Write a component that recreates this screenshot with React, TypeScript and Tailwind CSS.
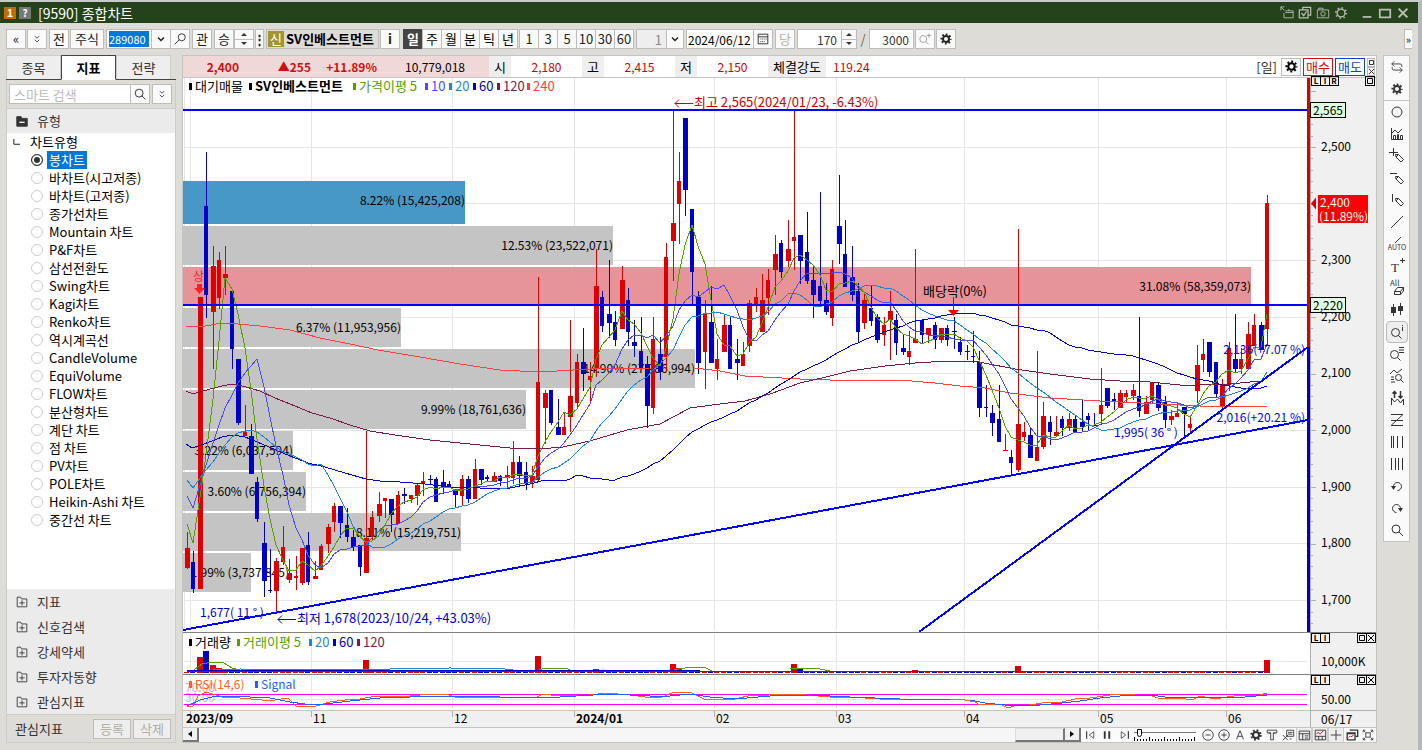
import { useState } from 'react';
import type { ReactNode } from 'react';
import { clsx } from 'clsx';

const RED = '#dd0000';
const BLUE = '#0000c8';
const LINE = '#0000ff';

// [high, body top, body bottom, low, rising]
type Candle = [number, number, number, number, 0 | 1];

const candles: Candle[] = [
  [532, 548, 568, 569, 1], [551, 562, 589, 593, 0], [297, 297, 589, 589, 1], [152, 206, 295, 318, 0], [246, 266, 312, 369, 1],
  [252, 260, 298, 309, 1], [246, 274, 278, 295, 1], [291, 291, 349, 369, 0], [359, 359, 423, 425, 0], [405, 432, 436, 436, 1],
  [424, 436, 474, 474, 0], [477, 482, 519, 522, 0], [522, 543, 581, 597, 0], [549, 590, 591, 593, 0], [558, 561, 591, 613, 1],
  [526, 547, 562, 565, 1], [559, 573, 580, 583, 1], [556, 576, 578, 590, 1], [548, 548, 583, 585, 1], [532, 545, 582, 585, 0],
  [561, 576, 579, 579, 1], [544, 546, 570, 570, 1], [524, 527, 544, 553, 1], [503, 506, 522, 532, 1], [506, 506, 523, 538, 0],
  [508, 525, 537, 542, 0], [530, 537, 547, 551, 0], [545, 545, 567, 576, 0], [431, 538, 573, 573, 1], [511, 517, 536, 540, 1],
  [492, 504, 516, 522, 1], [498, 498, 501, 518, 1], [499, 499, 515, 532, 0], [491, 495, 524, 524, 1], [488, 494, 496, 504, 0],
  [495, 495, 499, 503, 1], [484, 485, 496, 505, 1], [472, 481, 483, 496, 1], [475, 479, 480, 485, 0], [477, 479, 502, 502, 0],
  [470, 482, 487, 494, 0], [481, 484, 487, 488, 0], [491, 491, 495, 507, 0], [475, 479, 496, 505, 1], [476, 479, 499, 503, 0],
  [459, 469, 499, 499, 1], [469, 469, 480, 485, 0], [475, 477, 479, 481, 0], [472, 476, 482, 482, 1], [475, 476, 481, 486, 0],
  [466, 475, 478, 487, 1], [441, 462, 478, 484, 1], [456, 462, 476, 486, 0], [462, 472, 484, 490, 0], [466, 476, 482, 488, 1],
  [277, 382, 480, 482, 1], [390, 393, 408, 444, 1], [390, 390, 423, 425, 0], [399, 427, 435, 435, 0], [413, 427, 435, 435, 1],
  [320, 396, 417, 432, 1], [354, 362, 403, 409, 1], [328, 362, 374, 391, 0], [362, 376, 380, 404, 1], [249, 286, 368, 377, 1],
  [291, 297, 326, 332, 0], [260, 314, 323, 338, 0], [311, 322, 340, 346, 0], [266, 280, 329, 329, 1], [288, 300, 332, 346, 0],
  [320, 342, 346, 357, 0], [317, 351, 368, 368, 0], [356, 364, 406, 428, 0], [317, 339, 408, 414, 1], [337, 354, 372, 380, 0],
  [243, 257, 357, 372, 1], [110, 223, 241, 281, 1], [152, 181, 204, 244, 1], [118, 118, 190, 216, 0], [209, 209, 272, 305, 0],
  [291, 297, 363, 374, 0], [300, 314, 352, 389, 1], [286, 322, 363, 363, 0], [339, 359, 369, 380, 1], [314, 325, 352, 352, 1],
  [317, 325, 369, 369, 0], [339, 359, 363, 380, 0], [342, 354, 366, 366, 1], [300, 303, 346, 352, 1], [288, 297, 304, 312, 1],
  [274, 300, 332, 332, 1], [269, 280, 298, 315, 1], [235, 254, 270, 295, 1], [240, 243, 272, 278, 0], [220, 249, 261, 267, 1],
  [110, 237, 241, 270, 1], [235, 235, 261, 284, 0], [212, 252, 281, 284, 0], [266, 280, 295, 318, 0], [192, 286, 301, 306, 0],
  [283, 300, 312, 315, 0], [260, 269, 318, 326, 1], [175, 226, 244, 264, 0], [220, 254, 287, 287, 0], [246, 277, 295, 301, 0],
  [283, 291, 332, 343, 0], [294, 300, 323, 329, 1], [286, 308, 321, 326, 0], [314, 317, 340, 343, 0], [317, 325, 335, 346, 1],
  [291, 311, 320, 360, 1], [314, 320, 343, 355, 0], [334, 348, 352, 355, 0], [331, 351, 357, 365, 1], [249, 339, 343, 343, 1],
  [319, 320, 335, 343, 0], [328, 328, 335, 343, 1], [322, 325, 340, 349, 0], [328, 328, 340, 343, 1], [325, 328, 340, 346, 0],
  [317, 331, 332, 349, 0], [337, 342, 352, 355, 0], [345, 351, 352, 360, 0], [331, 356, 357, 363, 0], [351, 362, 408, 417, 0],
  [385, 407, 408, 417, 0], [405, 413, 423, 436, 0], [385, 419, 442, 442, 0], [434, 450, 451, 451, 1], [450, 457, 463, 475, 0],
  [229, 424, 470, 472, 1], [422, 432, 437, 441, 1], [427, 435, 458, 458, 0], [351, 447, 461, 461, 1], [402, 416, 447, 449, 1],
  [416, 422, 432, 445, 0], [416, 432, 436, 436, 1], [416, 419, 428, 436, 0], [413, 419, 428, 431, 1], [416, 419, 432, 433, 0],
  [399, 422, 427, 431, 0], [413, 416, 420, 430, 0], [413, 425, 426, 426, 0], [368, 405, 414, 425, 1], [388, 388, 406, 408, 0],
  [393, 399, 402, 410, 0], [390, 393, 408, 408, 1], [390, 393, 397, 402, 1], [384, 390, 396, 400, 1], [317, 396, 411, 417, 0],
  [396, 402, 414, 414, 1], [382, 382, 400, 403, 1], [382, 385, 408, 411, 0], [396, 402, 420, 428, 0], [410, 416, 420, 425, 1],
  [402, 413, 417, 417, 1], [407, 407, 414, 436, 0], [417, 424, 428, 432, 1], [345, 365, 391, 403, 1], [339, 354, 360, 372, 1],
  [342, 342, 372, 377, 0], [362, 362, 394, 397, 0], [379, 384, 406, 408, 1], [342, 348, 385, 391, 1], [314, 359, 369, 372, 0],
  [348, 359, 369, 374, 1], [322, 334, 369, 369, 1], [314, 325, 346, 346, 1], [322, 325, 350, 350, 0], [195, 203, 329, 346, 1],
];

const barX = (i: number) => Math.round(187 + i * 6.39);
const closes = candles.map(([, top, bottom, , up]) => (up ? top : bottom));

function average(size: number) {
  const points: string[] = [];
  for (let i = size - 1; i < closes.length; i++) {
    const sum = closes.slice(i - size + 1, i + 1).reduce((a, b) => a + b, 0);
    points.push(`${barX(i)},${Math.round(sum / size)}`);
  }
  return points.join(' ');
}

const lead = (values: number[]) => values.map((y, i) => `${barX(i)},${y}`).join(' ');

const averages = [
  {
    color: '#ff4040',
    points:
      '186,326 205,326 222,323 238,324 260,326 290,330 320,338 350,344 378,350 420,357 460,364 500,370 540,372 590,369 650,368 695,368 720,371 745,376 800,379 830,380 900,380 935,383 960,386 985,388 1010,393 1050,398 1100,401 1160,404 1200,406 1267,406',
  },
  {
    color: '#7a1a4a',
    points:
      '186,391 193,394 210,389 222,386 233,384 246,387 260,391 275,398 295,406 312,413 330,418 350,425 370,431 395,435 430,440 470,444 510,448 540,449 563,447 590,441 627,430 660,424 675,416 690,408 720,404 745,401 770,394 800,383 826,377 850,371 885,366 915,363 947,361 975,361 984,363 1015,369 1050,374 1090,379 1120,381 1150,382 1180,385 1200,385 1230,384 1250,382 1263,381',
  },
  {
    color: BLUE,
    points:
      '186,444 192,448 201,445 212,441 222,437 232,435 245,437 262,444 276,450 290,456 308,463 325,467 345,473 366,479 380,481 400,482 425,484 450,487 480,488 510,488 530,484 545,480 ' +
      average(60),
  },
  {
    color: '#1e86d2',
    points:
      lead([480, 488, 478, 470, 462, 453, 445, 437, 433, 431, 430, 432, 437, 442, 447, 452, 454, 457, 460]) + ' ' + average(20),
  },
  { color: '#4a4aff', points: lead([496, 508, 485, 465, 443, 425, 408, 395, 383]) + ' ' + average(10) },
  { color: '#55a000', points: lead([524, 543, 497, 455]) + ' ' + average(5) },
];

const profile = [
  { y: 181, h: 43, end: 465, label: '8.22% (15,425,208)', fill: '#4798c7' },
  { y: 226, h: 39, end: 613, label: '12.53% (23,522,071)', fill: '#c4c4c4' },
  { y: 267, h: 37, end: 1251, label: '31.08% (58,359,073)', fill: '#e69399' },
  { y: 308, h: 39, end: 401, label: '6.37% (11,953,956)', fill: '#c4c4c4' },
  { y: 349, h: 39, end: 695, label: '14.90% (27,986,994)', fill: '#c4c4c4' },
  { y: 390, h: 39, end: 526, label: '9.99% (18,761,636)', fill: '#c4c4c4' },
  { y: 431, h: 39, end: 293, label: '3.22% (6,037,594)', fill: '#c4c4c4' },
  { y: 472, h: 39, end: 306, label: '3.60% (6,756,394)', fill: '#c4c4c4' },
  { y: 513, h: 38, end: 461, label: '8.11% (15,219,751)', fill: '#c4c4c4' },
  { y: 553, h: 39, end: 251, textEnd: 289, label: '1.99% (3,737,845)', fill: '#c4c4c4' },
];

const gridX = [190, 311, 452, 574, 714, 836, 964, 1098, 1226];
const gridY = [147, 203, 260, 317, 373, 430, 487, 543, 600];

const priceLegend = [
  { x: 189, text: '대기매물', color: '#000' },
  { x: 249, text: 'SV인베스트먼트', color: '#000', bold: true },
  { x: 353, text: '가격이평 5', color: '#55a000' },
  { x: 425, text: '10', color: '#4a4aff' },
  { x: 449, text: '20', color: '#1e86d2' },
  { x: 473, text: '60', color: BLUE },
  { x: 497, text: '120', color: '#7a1a4a' },
  { x: 527, text: '240', color: '#ff4040' },
];

const volumeLegend = [
  { x: 189, text: '거래량', color: '#000' },
  { x: 237, text: '거래이평 5', color: '#55a000' },
  { x: 309, text: '20', color: '#1e86d2' },
  { x: 333, text: '60', color: BLUE },
  { x: 357, text: '120', color: '#7a1a4a' },
];

const volumePeaks: Record<number, number> = {
  2: 16, 3: 22, 4: 8, 5: 5, 6: 3, 28: 13, 55: 17, 64: 4, 76: 9, 77: 5, 95: 9, 96: 4, 114: 3, 130: 7, 169: 13,
};

const months = [
  { x: 190, text: '2023/09', bold: true, tx: 186 },
  { x: 311, text: '11' },
  { x: 452, text: '12' },
  { x: 574, text: '2024/01', bold: true },
  { x: 714, text: '02' },
  { x: 836, text: '03' },
  { x: 964, text: '04' },
  { x: 1098, text: '05' },
  { x: 1226, text: '06' },
];

const chartTypes = [
  '봉차트', '바차트(시고저종)', '바차트(고저종)', '종가선차트', 'Mountain 차트', 'P&F차트', '삼선전환도', 'Swing차트',
  'Kagi차트', 'Renko차트', '역시계곡선', 'CandleVolume', 'EquiVolume', 'FLOW차트', '분산형차트', '계단 차트',
  '점 차트', 'PV차트', 'POLE차트', 'Heikin-Ashi 차트', '중간선 차트',
];

const sections = ['지표', '신호검색', '강세약세', '투자자동향', '관심지표'];

/* ---------- icons ---------- */

function Icon({ children, size = 16, className }: { children: ReactNode; size?: number; className?: string }) {
  return (
    <svg
      width={size}
      height={size}
      viewBox="0 0 16 16"
      fill="none"
      stroke="currentColor"
      strokeWidth="1"
      className={clsx('shrink-0 overflow-visible', className)}
      aria-hidden="true"
    >
      {children}
    </svg>
  );
}

const Gear = ({ size = 14 }: { size?: number }) => (
  <Icon size={size}>
    <circle cx="8" cy="8" r="4" strokeWidth="2.6" />
    <circle cx="8" cy="8" r="6.2" strokeWidth="2.4" strokeDasharray="2.4 2.47" strokeDashoffset="1.2" />
  </Icon>
);

const Magnifier = ({ size = 16 }: { size?: number }) => (
  <Icon size={size}>
    <circle cx="7" cy="7" r="4.5" />
    <path d="M10 10l4 4" />
  </Icon>
);

const Chevron = () => (
  <Icon size={12}>
    <path d="M4 6l4 4 4-4" strokeWidth="2" />
  </Icon>
);

const pencil = <path d="M6.500 6.500h3l5 5-2.500 2.500-5-5zM7 9l2.500-2.500" />;

const tools: { name: string; icon: ReactNode }[] = [
  { name: '원', icon: <circle cx="8" cy="8" r="5" /> },
  { name: '지표차트', icon: <path d="M2.500 2v11.500H14M4.500 13V9.500h2V13M8.500 13V8.500h1V13M11.500 13V9.500h2V13M3 7l3-3 3 3 4-4" /> },
  { name: '십자선', icon: <><path d="M4.500 0v8M0 4.500h9" />{pencil}</> },
  { name: '수평선', icon: <><path d="M1 3.500h7" />{pencil}</> },
  { name: '수직선', icon: <><path d="M3.500 2v8" />{pencil}</> },
  { name: '추세선', icon: <path d="M2 14L14 2" /> },
  {
    name: '자동추세선',
    icon: (
      <>
        <path d="M6 7l6-6" />
        <text x="8" y="14" fontSize="7" textAnchor="middle" fill="currentColor" stroke="none">AUTO</text>
      </>
    ),
  },
  {
    name: '텍스트',
    icon: (
      <>
        <text x="2" y="14" fontSize="13" fill="currentColor" stroke="none" fontFamily="Liberation Serif, serif">T</text>
        <path d="M11 2.500h5M13.500 0v5" />
      </>
    ),
  },
  {
    name: '전체삭제',
    icon: (
      <>
        <text x="1" y="6" fontSize="8" fill="currentColor" stroke="none">All</text>
        <path d="M5.500 11.500l3-4h6l-3 4zM5.500 11.500v3h6l3-3.500V7.500M11.500 11.500v3" />
      </>
    ),
  },
  {
    name: '봉',
    icon: (
      <>
        <path d="M4.500 2v12M11.500 1v12" />
        <path d="M2 5h5v6H2zM9 4h5v5H9z" fill="currentColor" stroke="none" />
      </>
    ),
  },
  { name: '정보', icon: <><circle cx="6.500" cy="8.500" r="4" /><path d="M9.500 11.500l3 3M13.500 1v1M13.500 3v4" /></> },
  { name: '목록', icon: <><circle cx="5.500" cy="8.500" r="4" /><path d="M8.500 11.500l3 3M10 1.500h5M10 4h5M10 6.500h5" /></> },
  { name: '패턴검색', icon: <><path d="M1 6l4-4 3 3 5-4M2 9h3M2 11.500h3M2 14h4" /><circle cx="9.500" cy="9.500" r="3" /><path d="M11.500 11.500l3 3" /></> },
  { name: '매매신호', icon: <><path d="M2.500 15V8l3 4 3-3 3 4 3-4v6" /><path d="M5.500 8V1M3.500 3.500l2-2 2 2M11.500 1v7M9.500 6l2 2 2-2" strokeWidth="1.500" /></> },
  { name: '지그재그', icon: <path d="M2 2.500h12L2 13.500h12M2 8.500h12" /> },
  { name: '시간대', icon: <path d="M2.500 2v12M4.500 2v12M8.500 2v12M13.500 2v12" /> },
  { name: '등간격', icon: <path d="M2.500 2v12M6.500 2v12M9.500 2v12M13.500 2v12" /> },
  { name: '되돌리기', icon: <><path d="M4.500 9a4 4 0 1 1 4 3.500" /><path d="M2 8h5l-2.500 4z" fill="currentColor" stroke="none" /></> },
  { name: '다시실행', icon: <><path d="M11.500 9a4 4 0 1 0-4 3.500" /><path d="M9 8h5l-2.500 4z" fill="currentColor" stroke="none" /></> },
  { name: '확대', icon: <><circle cx="7" cy="7" r="4" /><path d="M10 10l4 4" /></> },
];

const bottomTools: { name: string; icon: ReactNode; boxed?: boolean }[] = [
  { name: '축소', icon: <><circle cx="8" cy="8" r="6" /><path d="M5 8h6" /></> },
  { name: '확대', icon: <><circle cx="8" cy="8" r="6" /><path d="M5 8h6M8 5v6" /></> },
  { name: '글자', icon: <path d="M4 13L8 3l4 10M5.500 9.500h5" /> },
  { name: '설정', icon: <><circle cx="8" cy="8" r="3.500" strokeWidth="2.400" /><circle cx="8" cy="8" r="5.500" strokeWidth="2" strokeDasharray="2.160 2.160" /></> },
  { name: '도구', icon: <path d="M2.500 2.500h11v3h-4v8h-3v-8h-4zM4 7l2-2M12 7l-2-2" /> },
  { name: '엑셀', icon: <path d="M6.500 2.500h8v7h-8zM8 5h5M8 7h5M2 8l6 6M8 8l-6 6M10 12.500h2" /> },
  { name: '표', icon: <path d="M2.500 3.500h12v10h-12zM2.500 6.500h12M6.500 6.500v7M9 9h4M9 11.500h4" />, boxed: true },
  { name: '분석', icon: <><path d="M2.500 2.500h12v11h-12zM2.500 9.500h12M6.500 9.500v4M10.500 9.500v4" /><path d="M4 7l2-2 2 2 4-4" stroke="#b00020" /></>, boxed: true },
  { name: '십자', icon: <path d="M2 8h12M8 2v12" />, boxed: true },
  { name: '창복사', icon: <><path d="M5.500 2.500h9v7h-2M2.500 5.500h9v8h-9zM2.500 6.500h9" strokeWidth="1.500" /><path d="M4 11l2-2 1 1 3-2" stroke="#b00020" /></> },
  { name: '전체화면', icon: <path d="M2.500 5V2.500H5M11 2.500h2.500V5M13.500 11v2.500H11M5 13.500H2.500V11M5.500 5.500h5v5h-5zM3 3l2 2M13 3l-2 2M3 13l2-2M13 13l-2-2" /> },
];

/* ---------- small controls ---------- */

const toolBox = 'flex h-5 items-center justify-center border border-[#bdbcb8] bg-[#fafafa] text-[#222]';

function ToolButton({ children, className, label }: { children: ReactNode; className?: string; label?: string }) {
  return (
    <button type="button" aria-label={label} className={clsx(toolBox, className ?? 'w-5')}>
      {children}
    </button>
  );
}

function Stepper({ className }: { className?: string }) {
  return (
    <div className={clsx('flex h-5 flex-col border border-[#bdbcb8] bg-[#fafafa] text-[#333]', className)}>
      <button type="button" aria-label="증가" className="flex flex-1 items-center justify-center border-b border-[#bdbcb8]">
        <svg width="6" height="3" viewBox="0 0 6 3"><path d="M0 3l3-3 3 3z" fill="currentColor" /></svg>
      </button>
      <button type="button" aria-label="감소" className="flex flex-1 items-center justify-center">
        <svg width="6" height="3" viewBox="0 0 6 3"><path d="M0 0l3 3 3-3z" fill="currentColor" /></svg>
      </button>
    </div>
  );
}

function TitleBar() {
  return (
    <header className="flex h-[21px] items-center justify-between bg-[#24431b] pr-2 pl-1 text-white">
      <div className="flex items-center gap-[3px]">
        <span className="flex h-3 w-3 items-center justify-center bg-[#c46a00] text-[11px] font-bold">1</span>
        <span className="flex h-3 w-3 items-center justify-center bg-[#777] text-[10px] font-bold">?</span>
        <h1 className="ml-1 text-sm">[9590] 종합차트</h1>
      </div>
      <div className="flex items-center gap-1 text-[#b9bdb4]">
        <button type="button" aria-label="창 분리">
          <Icon size={14}><path d="M6 5.500h9v8H4.500V8M10 5.500v-2M6 7.500h9M1 1l4 4M1 5V1h4" /></Icon>
        </button>
        <button type="button" aria-label="창 복사">
          <Icon size={14}><path d="M5.500 4V1.500h9v9H12M1.500 4.500h10v9h-10zM4 8l2.500 3L10 6" strokeWidth="1.400" /></Icon>
        </button>
        <button type="button" aria-label="화면 저장">
          <Icon size={14}><path d="M1.500 4.500h13v9h-13zM3 4.500v-2h5v2" /><circle cx="8" cy="9" r="2.500" /></Icon>
        </button>
        <button type="button" aria-label="환경설정">
          <Icon size={14}><circle cx="8" cy="8" r="4.500" strokeWidth="1.500" /><circle cx="8" cy="8" r="6" strokeWidth="2" strokeDasharray="1.500 3.210" /></Icon>
        </button>
        <button type="button" aria-label="최소화" className="ml-2">
          <Icon size={14}><path d="M3 12.500h10" strokeWidth="2" /></Icon>
        </button>
        <button type="button" aria-label="최대화">
          <Icon size={14}><path d="M2 4h12v9H2z" strokeWidth="2" /></Icon>
        </button>
        <button type="button" aria-label="닫기">
          <Icon size={14}><path d="M3 3l10 10M13 3L3 13" strokeWidth="2.400" /></Icon>
        </button>
      </div>
    </header>
  );
}

function Toolbar() {
  const [period, setPeriod] = useState('일');

  return (
    <div className="flex h-8 items-center pl-1.5 text-[13px]">
      <ToolButton label="이전">«</ToolButton>
      <ToolButton label="펼치기" className="ml-px w-5">
        <Icon size={12}><path d="M5 4l3 3 3-3M5 9l3 3 3-3" /></Icon>
      </ToolButton>
      <ToolButton className="ml-0.5 w-5">전</ToolButton>
      <ToolButton className="ml-px w-[34px]">주식</ToolButton>
      <div className="ml-0.5 flex h-5 w-[46px] items-center border border-[#bdbcb8] bg-white px-0.5">
        <input
          aria-label="종목코드"
          defaultValue="289080"
          className="h-4 w-10 bg-[#0078d7] p-0 text-[11px] text-white outline-none"
        />
      </div>
      <ToolButton label="종목 목록" className="-ml-px w-5"><Chevron /></ToolButton>
      <ToolButton label="종목 검색" className="-ml-px w-5">
        <Icon size={14}><circle cx="10" cy="6" r="4" /><path d="M7 9l-5 5" /></Icon>
      </ToolButton>
      <ToolButton className="ml-0.5 w-5">관</ToolButton>
      <ToolButton className="ml-0.5 w-5">승</ToolButton>
      <Stepper className="w-5" />
      <ToolButton label="더보기" className="ml-px w-[9px] font-bold">⋮</ToolButton>
      <div className="ml-0.5 flex h-5 w-[113px] items-center gap-0.5 overflow-hidden border border-[#bdbcb8] bg-[#dddcd6] pl-px">
        <span className="flex h-4 w-4 shrink-0 items-center justify-center bg-[#a39430] text-white">신</span>
        <span className="font-bold whitespace-nowrap text-black">SV인베스트먼트</span>
      </div>
      <ToolButton className="ml-px w-5 font-bold">i</ToolButton>
      <div className="ml-[3px] flex">
        {['일', '주', '월', '분', '틱', '년'].map((p) => (
          <button
            key={p}
            type="button"
            onClick={() => setPeriod(p)}
            className={clsx(
              '-mr-px flex h-5 w-5 items-center justify-center border',
              period === p ? 'border-[#444] bg-[#444] font-bold text-white' : 'border-[#bdbcb8] bg-[#fafafa] text-black'
            )}
          >
            {p}
          </button>
        ))}
      </div>
      <div className="ml-0.5 flex">
        {['1', '3', '5', '10', '30', '60'].map((n) => (
          <ToolButton key={n} className="-mr-px w-5">{n}</ToolButton>
        ))}
      </div>
      <input
        aria-label="분 간격"
        defaultValue="1"
        className="ml-[3px] h-5 w-[31px] border border-[#bdbcb8] bg-[#eee] px-1 text-right text-[#888]"
      />
      <ToolButton label="간격 목록" className="-ml-px w-[18px]"><Chevron /></ToolButton>
      <input
        aria-label="기준일"
        defaultValue="2024/06/12"
        className="ml-0.5 h-5 w-[68px] border border-[#bdbcb8] bg-white px-px text-[12px]"
      />
      <ToolButton label="달력" className="-ml-px w-5">
        <Icon size={14}><path d="M2.500 2.500h11v11h-11zM2.500 5.500h11" /><path d="M5 8h7M5 11h5" strokeDasharray="1 1" /></Icon>
      </ToolButton>
      <ToolButton className="ml-0.5 w-5 text-[#b5b3a2]">당</ToolButton>
      <input
        aria-label="표시 봉 수"
        defaultValue="170"
        className="ml-0.5 h-5 w-[45px] border border-[#bdbcb8] bg-white px-1 text-right text-[12px] text-[#333]"
      />
      <Stepper className="-ml-px w-4" />
      <span className="w-3 text-center text-[#666]">/</span>
      <input
        aria-label="전체 봉 수"
        defaultValue="3000"
        className="h-5 w-[45px] border border-[#bdbcb8] bg-white px-1 text-right text-[12px] text-[#333]"
      />
      <ToolButton label="조회 확대" className="ml-px w-5 text-[#999]">
        <Icon size={14}><circle cx="6" cy="8" r="4" /><path d="M9 11l3 3M10 4h5M12.500 1.500v5" /></Icon>
      </ToolButton>
      <ToolButton label="차트 설정" className="ml-px w-5"><Gear size={12} /></ToolButton>
      <button type="button" className="mr-1.5 ml-auto h-5 w-2 border border-r-0 border-[#bdbcb8] bg-[#fafafa] text-[11px] leading-4">»</button>
    </div>
  );
}

function Sidebar() {
  const [selected, setSelected] = useState('봉차트');

  return (
    <aside className="flex w-[170px] shrink-0 flex-col text-[13px] text-[#333]">
      <div className="flex h-[25px] border-b border-[#444]">
        {['종목', '지표', '전략'].map((tab) => (
          <button
            key={tab}
            type="button"
            className={clsx(
              'w-[55px] border',
              tab === '지표' ? '-mb-px border-[#444] border-b-white bg-white font-bold text-black' : 'border-[#ccc] border-b-0 bg-[#eee]'
            )}
          >
            {tab}
          </button>
        ))}
      </div>
      <div className="flex min-h-0 flex-1 flex-col border-x border-b border-[#ccc] bg-white">
        <div className="flex h-[29px] items-center border-b border-[#ccc] bg-[#dddcd6] px-0.5">
          <input
            aria-label="스마트 검색"
            placeholder="스마트 검색"
            className="h-5 w-[122px] border border-[#bdbcb8] bg-white px-1 placeholder:text-[#bbb]"
          />
          <ToolButton label="검색" className="-ml-px w-5"><Magnifier size={14} /></ToolButton>
          <ToolButton label="펼치기" className="ml-0.5 w-5">
            <Icon size={12}><path d="M5 4l3 3 3-3M5 9l3 3 3-3" /></Icon>
          </ToolButton>
        </div>
        <button type="button" className="flex h-6 items-center gap-2 bg-[#ebebeb] px-2">
          <Icon size={14}><path d="M2 3h5l1 2h6v9H2z" fill="currentColor" /><path d="M5 9.500h6" stroke="#fff" strokeWidth="1.500" /></Icon>
          유형
        </button>
        <div className="flex flex-1 flex-col text-black">
          <div className="flex h-[18px] items-center gap-2.5 pl-1.5">
            <Icon size={7}><path d="M2 0v12h14" strokeWidth="2" /></Icon>
            차트유형
          </div>
          {chartTypes.map((type) => (
            <label key={type} className="flex h-[18px] items-center gap-1 pl-6">
              <input
                type="radio"
                name="chart-type"
                checked={selected === type}
                onChange={() => setSelected(type)}
                className="h-3 w-3 shrink-0 appearance-none rounded-full border border-[#ccc] bg-white checked:border-[#333] checked:bg-[#333] checked:shadow-[inset_0_0_0_2px_#fff]"
              />
              <span className={clsx('px-0.5 leading-[18px] whitespace-nowrap', selected === type && 'bg-[#0078d7] text-white')}>{type}</span>
            </label>
          ))}
        </div>
        {sections.map((name) => (
          <button key={name} type="button" className="flex h-[25px] items-center gap-2 bg-[#ebebeb] px-2">
            <Icon size={14}><path d="M2.500 13.500v-11h4l1 2h6v9zM5 9h6M8 6v6" /></Icon>
            {name}
          </button>
        ))}
        <div className="flex h-7 items-center gap-0.5 border-t border-[#ccc] bg-[#dddcd6] pr-1 pl-2">
          <span className="flex-1">관심지표</span>
          <button type="button" className="h-5 w-[38px] border border-[#bdbcb8] bg-[#eee] leading-4 text-[#b0aea0]">등록</button>
          <button type="button" className="h-5 w-[38px] border border-[#bdbcb8] bg-[#eee] leading-4 text-[#b0aea0]">삭제</button>
        </div>
      </div>
    </aside>
  );
}

function QuoteCell({ label, value, wide }: { label: string; value: string; wide?: boolean }) {
  return (
    <>
      <span className={clsx('flex h-full items-center justify-center bg-[#eee] text-black', wide ? 'w-[58px]' : 'w-[22px]')}>{label}</span>
      <span className={clsx('text-[12px] text-[#cc0000]', wide ? 'pl-[7px]' : 'w-[71px] text-center')}>{value}</span>
    </>
  );
}

function QuoteBar() {
  return (
    <div className="flex h-[22px] items-center border-b border-[#c4c4c4] bg-white text-[13px]">
      <div className="flex h-full w-[306px] items-center bg-[#f1d8d8] text-right text-[12px] font-bold text-[#d01010]">
        <span className="w-14">2,400</span>
        <span className="w-[72px]">▲255</span>
        <span className="w-[66px]">+11.89%</span>
        <span className="w-[88px] font-normal text-black">10,779,018</span>
      </div>
      <QuoteCell label="시" value="2,180" />
      <QuoteCell label="고" value="2,415" />
      <QuoteCell label="저" value="2,150" />
      <QuoteCell label="체결강도" value="119.24" wide />
      <div className="ml-auto flex items-center gap-0.5 pr-px">
        <span className="mr-0.5 text-[#333]">[일]</span>
        <button type="button" aria-label="차트 설정" className="flex h-[18px] w-5 items-center justify-center border border-[#bdbcb8] bg-[#fafafa]"><Gear size={13} /></button>
        <button type="button" className="h-[18px] w-[30px] border border-[#d01010] bg-white leading-4 text-[#d01010]">매수</button>
        <button type="button" className="h-[18px] w-[30px] border border-[#1440d0] bg-white leading-4 text-[#1440d0]">매도</button>
        <div className="flex flex-col">
          <button type="button" aria-label="확장" className="flex h-[9px] w-2 items-center justify-center border border-[#bbb]">
            <svg width="5" height="5" viewBox="0 0 5 5"><path d="M.5.5h4v4h-4z" fill="none" stroke="#333" /></svg>
          </button>
          <button type="button" aria-label="닫기" className="flex h-[9px] w-2 items-center justify-center border border-[#bbb]">
            <svg width="5" height="5" viewBox="0 0 5 5"><path d="M0 0l5 5M5 0L0 5" stroke="#333" /></svg>
          </button>
        </div>
      </div>
    </div>
  );
}

/* ---------- chart panes ---------- */

type LegendItem = { x: number; text: string; color: string; bold?: boolean };

function Legend({ items, y }: { items: LegendItem[]; y: number }) {
  return (
    <g fontSize="13">
      {items.map((item) => (
        <g key={item.x} fill={item.color}>
          <rect x={item.x} y={y - 8} width="3" height="7" />
          <text x={item.x + 6} y={y} fontWeight={item.bold ? 700 : 400}>{item.text}</text>
        </g>
      ))}
    </g>
  );
}

function PricePane() {
  return (
    <svg viewBox="183 78 1127 554" preserveAspectRatio="xMinYMin meet" className="h-[554px] w-full overflow-visible bg-white" role="img" aria-label="가격 차트">
      <g stroke="#e6e6e6" shapeRendering="crispEdges">
        <path d="M184.500 78v552" />
        {gridX.map((x) => <path key={x} d={`M${x + 0.5} 78V630`} />)}
        {gridY.map((y) => <path key={y} d={`M184 ${y + 0.5}H1307`} />)}
      </g>
      {profile.map((bar) => (
        <g key={bar.y}>
          <rect x="183" y={bar.y} width={bar.end - 183} height={bar.h} fill={bar.fill} shapeRendering="crispEdges" />
          <text x={bar.textEnd ?? bar.end} y={bar.y + 24} fontSize="12" textAnchor="end">{bar.label}</text>
        </g>
      ))}
      <g shapeRendering="crispEdges">
        {candles.map(([high, top, bottom, low, up], i) => (
          <g key={i} fill={up ? RED : BLUE}>
            <rect x={barX(i)} y={high} width="1" height={low - high} />
            <rect x={barX(i) - 2} y={top} width={i % 2 ? 4 : 5} height={Math.max(bottom - top, 1)} />
          </g>
        ))}
        {averages.map((line) => (
          <polyline key={line.color} points={line.points} fill="none" stroke={line.color} />
        ))}
      </g>
      <g stroke={LINE} strokeWidth="2" shapeRendering="crispEdges">
        <path d="M183 110H1308M183 305H1308" />
        <path d="M183 630L1308 420M919 632L1308 347" fill="none" />
      </g>
      <rect x="1307" y="78" width="3" height="269" fill={RED} />
      <rect x="1307" y="347" width="3" height="285" fill={BLUE} />
      <Legend items={priceLegend} y={91} />
      <g fontSize="12">
        <g fill="#cc0000">
          <path d="M675 103.500h18M679 99.500l-4 4 4 4" stroke="#cc0000" fill="none" />
          <text x="694" y="107" fontSize="13">최고 2,565(2024/01/23, -6.43%)</text>
        </g>
        <g fill="#0000c8">
          <path d="M278 619.500h18M282 615.500l-4 4 4 4" stroke="#0000c8" fill="none" />
          <text x="297" y="623" fontSize="13">최저 1,678(2023/10/24, +43.03%)</text>
          <text x="200" y="617">1,677( 11 ° )</text>
          <text x="1114" y="437">1,995( 36 ° )</text>
        </g>
        <text x="1305" y="354" textAnchor="end" fill="#0000ff">2,136(+7.07 %)</text>
        <text x="1305" y="422" textAnchor="end" fill="#0000ff">2,016(+20.21 %)</text>
        <text x="193" y="281" fill="#ff2020">상</text>
        <path d="M197 284h5v4h3l-5.500 6-5.500-6h3z" fill="#ff2020" />
        <text x="923" y="296" fontSize="13">배당락(0%)</text>
        <path d="M948 310h11l-5.500 6z" fill="#ff0000" />
        <path d="M953.500 297v13" stroke={RED} />
      </g>
    </svg>
  );
}

function PaneButtons({ left, right }: { left: string[]; right: ('box' | 'x')[] }) {
  return (
    <div className="flex justify-between">
      <div className="flex">
        {left.map((name) => (
          <button key={name} type="button" className="-mr-px h-2.5 w-2.5 border border-black text-[8px] leading-2 font-bold">{name}</button>
        ))}
      </div>
      <div className="flex">
        {right.map((kind) => (
          <button
            key={kind}
            type="button"
            aria-label={kind === 'box' ? '확장' : '닫기'}
            className="-ml-px flex h-2.5 w-2.5 items-center justify-center border border-black"
          >
            <svg width="6" height="6" viewBox="0 0 6 6">
              <path d={kind === 'box' ? 'M.5.5h5v5h-5z' : 'M0 0l6 6M6 0L0 6'} fill="none" stroke="#000" />
            </svg>
          </button>
        ))}
      </div>
    </div>
  );
}

function PriceAxis() {
  return (
    <div className="relative bg-[#f0f0f0]">
      <svg viewBox="1310 78 66 554" className="h-[554px] w-full" role="img" aria-label="가격 축">
        <g stroke="#b0b0b0" shapeRendering="crispEdges">
          {Array.from({ length: 48 }, (_, i) => (
            <path key={i} d={`M1311 ${Math.round(90.5 + i * 11.33)}.5h${(i % 5) === 0 ? 5 : 2}`} />
          ))}
          <path d="M1310.500 78v554" />
        </g>
        <g fontSize="12">
          {gridY.map((y, i) => (i === 1 ? null : (
            <text key={y} x="1321" y={y + 4}>{(2500 - i * 100).toLocaleString('en-US')}</text>
          )))}
          <rect x="1310.500" y="102.500" width="35" height="15" fill="#e0ffe0" stroke="#000" />
          <text x="1313" y="115">2,565</text>
          <rect x="1310.500" y="297.500" width="35" height="15" fill="#e0ffe0" stroke="#000" />
          <text x="1313" y="310">2,220</text>
          <path d="M1311 203.500l5-6v12z" fill={RED} />
          <rect x="1318" y="195" width="50" height="28" fill="#ff0000" />
          <text x="1320" y="207" fill="#fff">2,400</text>
          <text x="1319" y="221" fill="#fff">(11.89%)</text>
        </g>
      </svg>
      <div className="absolute inset-x-0 -top-0.5 px-px">
        <PaneButtons left={['L', 'I', 'R']} right={['box']} />
      </div>
    </div>
  );
}

function VolumePane() {
  return (
    <svg viewBox="183 633 1127 41" preserveAspectRatio="xMinYMin meet" className="h-[41px] w-full overflow-visible bg-white" role="img" aria-label="거래량 차트">
      <g stroke="#e6e6e6" shapeRendering="crispEdges">
        {gridX.map((x) => <path key={x} d={`M${x + 0.5} 634V673`} />)}
        <path d="M184 661.500H1307" />
      </g>
      <g shapeRendering="crispEdges">
        {candles.map((c, i) => {
          const h = volumePeaks[i] ?? 1;
          return <rect key={i} x={barX(i) - 3} y={673 - h} width={h > 2 ? 6 : 5} height={h} fill={c[4] ? RED : BLUE} />;
        })}
        <polyline points="187,671 194,670 202,664 212,662 224,663 232,668 240,670 560,671" fill="none" stroke="#55a000" />
        <polyline points="187,671 240,669 330,670 450,668 505,669 520,671" fill="none" stroke="#1e86d2" />
        <polyline points="536,671 545,668 566,668 572,671" fill="none" stroke="#55a000" />
        <polyline points="674,670 690,667 706,668 712,671" fill="none" stroke="#55a000" />
        <polyline points="790,669 815,668 830,671" fill="none" stroke="#55a000" />
        <path d="M187 671.500H1267" stroke="#7a1a4a" />
        <path d="M187 670.500H700" stroke={BLUE} />
      </g>
      <Legend items={volumeLegend} y={647} />
    </svg>
  );
}

function RsiPane() {
  return (
    <svg viewBox="183 675 1127 35" preserveAspectRatio="xMinYMin meet" className="h-[35px] w-full overflow-visible bg-white" role="img" aria-label="RSI 차트">
      <g stroke="#e6e6e6" shapeRendering="crispEdges">
        {gridX.map((x) => <path key={x} d={`M${x + 0.5} 676V709`} />)}
        <path d="M184 699.500H1307" />
      </g>
      <g fontSize="12">
        <text x="185" y="692" fill="#f0a0c0">70.00</text>
        <text x="185" y="702" fill="#a8c8e8">30.00</text>
      </g>
      <g fill="none" shapeRendering="crispEdges">
        <path d="M184 694.500H1307M184 704.500H1307" stroke="#ff00ff" />
        <polyline
          stroke="#ff6020"
          points="187,706 193,706 198,696 206,692 222,697 240,698 262,700 275,700 288,698 296,706 316,706 330,702 345,700 360,699 376,696 400,697 430,694 446,694 455,697 500,697 536,698 542,694 560,696 590,695 606,693 630,695 645,697 660,698 672,693 690,692 704,699 730,700 748,696 790,694 806,695 830,697 850,697 880,699 910,699 935,700 960,699 975,702 980,705 1000,704 1008,708 1014,706 1030,705 1042,703 1062,702 1075,699 1090,698 1110,695 1120,694 1135,695 1152,696 1158,698 1180,698 1192,700 1200,696 1215,699 1240,695 1260,695 1267,693"
        />
        <polyline
          stroke="#2060ff"
          points="187,706 200,700 212,697 230,696 270,698 290,702 305,704 325,704 350,701 380,698 410,697 440,696 470,696 530,698 560,697 610,694 650,696 670,696 690,694 710,697 735,699 770,696 810,695 850,697 900,699 950,700 970,700 985,703 1015,706 1040,705 1062,703 1080,701 1100,698 1120,696 1150,695 1165,697 1190,698 1220,697 1245,697 1267,695"
        />
      </g>
      <g fontSize="12">
        <rect x="189" y="681" width="3" height="7" fill="#ff6020" />
        <text x="195" y="689" fill="#ff6020">RSI(14,6)</text>
        <rect x="255" y="681" width="3" height="7" fill="#2060ff" />
        <text x="261" y="689" fill="#2060ff">Signal</text>
      </g>
    </svg>
  );
}

function SmallAxis({ label, className }: { label: string; className: string }) {
  return (
    <div className={clsx('flex flex-col border-l border-[#b0b0b0] bg-[#f0f0f0]', className)}>
      <PaneButtons left={['L', 'I']} right={['box', 'x']} />
      <span className="pl-2.5 text-[12px] leading-4">{label}</span>
    </div>
  );
}

function ScrollRow() {
  return (
    <div className="flex h-[15px] items-center border-t border-[#c4c4c4] bg-[#fafafa] text-[#333]">
      <button type="button" aria-label="왼쪽" className="flex h-[14px] w-4 items-center justify-center border-r-2 border-b-2 border-[#777] bg-[#f0f0f0]">
        <svg width="4" height="6" viewBox="0 0 4 6"><path d="M4 0v6L0 3z" fill="#000" /></svg>
      </button>
      <div className="flex h-full flex-1 justify-end bg-[#f6f6f6]">
        <div className="h-[14px] w-[50px] border border-r-2 border-b-2 border-[#777] border-t-[#ddd] border-l-[#ddd] bg-[#f0f0f0]" />
      </div>
      <button type="button" aria-label="오른쪽" className="flex h-[14px] w-4 items-center justify-center border-r-2 border-b-2 border-[#777] bg-[#f0f0f0]">
        <svg width="4" height="6" viewBox="0 0 4 6"><path d="M0 0v6l4-3z" fill="#000" /></svg>
      </button>
      <div className="flex w-[53px] items-center justify-around">
        <button type="button" aria-label="처음"><Icon size={12}><path d="M3.500 3v10" strokeWidth="1.500" /><path d="M13 3.500v9L7 8z" /></Icon></button>
        <button type="button" aria-label="일시정지"><Icon size={12}><path d="M5 3v10M11 3v10" strokeWidth="2.500" /></Icon></button>
        <button type="button" aria-label="끝"><Icon size={12}><path d="M12.500 3v10" strokeWidth="1.500" /><path d="M3 3.500v9L9 8z" /></Icon></button>
      </div>
      <div className="flex w-[62px] flex-col">
        <input
          type="range"
          aria-label="속도"
          defaultValue="6"
          className="h-2 w-full appearance-none bg-[linear-gradient(#777,#777)] bg-[length:100%_1px] bg-[position:0_3px] bg-no-repeat [&::-webkit-slider-thumb]:h-2 [&::-webkit-slider-thumb]:w-[5px] [&::-webkit-slider-thumb]:appearance-none [&::-webkit-slider-thumb]:rounded-b-sm [&::-webkit-slider-thumb]:border [&::-webkit-slider-thumb]:border-black [&::-webkit-slider-thumb]:bg-white"
        />
        <svg viewBox="0 0 62 4" className="h-1 w-full" shapeRendering="crispEdges">
          {Array.from({ length: 21 }, (_, i) => (
            <path key={i} d={`M${i * 3 + 0.5} ${i % 5 ? 2 : 0}V4`} stroke="#000" />
          ))}
        </svg>
      </div>
      <div className="flex items-center pl-1">
        {bottomTools.map((tool) => (
          <button
            key={tool.name}
            type="button"
            aria-label={tool.name}
            className={clsx('flex h-[14px] w-4 items-center justify-center', tool.boxed && 'border-x border-[#ccc] bg-[#eee]')}
          >
            <Icon size={14}>{tool.icon}</Icon>
          </button>
        ))}
      </div>
    </div>
  );
}

function ChartArea() {
  return (
    <main className="ml-1.5 flex min-w-0 flex-1 flex-col self-start border border-[#c4c4c4]">
      <QuoteBar />
      <div className="grid grid-cols-[1fr_66px]">
        <PricePane />
        <PriceAxis />
        <div className="border-t border-[#808080]"><VolumePane /></div>
        <div className="border-t border-[#808080]"><SmallAxis label="10,000K" className="h-[41px] gap-2.5" /></div>
        <div className="border-t border-[#808080]"><RsiPane /></div>
        <div className="border-t border-[#808080]"><SmallAxis label="50.00" className="h-[35px] gap-1.5" /></div>
        <div className="border-t border-[#c4c4c4] bg-[#f0f0f0]">
          <svg viewBox="183 711 1127 16" preserveAspectRatio="xMinYMin meet" className="h-4 w-full overflow-visible">
            {months.map((m) => (
              <g key={m.x}>
                <path d={`M${m.x + 0.5} 711v6`} stroke="#b0b0b0" />
                <text x={m.tx ?? m.x + 2} y="723" fontSize="12" fontWeight={m.bold ? 700 : 400}>{m.text}</text>
              </g>
            ))}
          </svg>
        </div>
        <div className="border-t border-l border-[#b0b0b0] bg-[#f0f0f0] pl-2.5 text-[12px] leading-4">06/17</div>
      </div>
      <ScrollRow />
    </main>
  );
}

function ToolRail() {
  return (
    <nav aria-label="그리기 도구" className="mr-2 ml-1.5 flex w-[27px] shrink-0 flex-col items-center self-start border border-[#c4c4c4] bg-[#fafafa] text-[#333]">
      <div className="flex w-full flex-col items-center border-b border-[#c4c4c4]">
        <button type="button" aria-label="새로고침" className="flex h-[22px] items-center">
          <Icon size={14}><path d="M2 4.500h9.500a2 2 0 0 1 2 2V8M5 1.500l-3 3 3 3M14 11.500H4.500a2 2 0 0 1-2-2V8M11 8.500l3 3-3 3" /></Icon>
        </button>
        <button type="button" aria-label="설정" className="flex h-[22px] items-center"><Gear size={12} /></button>
      </div>
      {tools.map((tool) => (
        <button
          key={tool.name}
          type="button"
          aria-label={tool.name}
          className={clsx(
            'flex h-[22px] w-[22px] items-center justify-center',
            tool.name === '정보' && 'rounded-sm border border-[#bbb] bg-[#eee]'
          )}
        >
          <Icon size={16}>{tool.icon}</Icon>
        </button>
      ))}
    </nav>
  );
}

export default function App() {
  return (
    <div className="flex min-h-screen flex-col border-t-2 border-r-4 border-b border-t-[#c8cacc] border-r-[#b4b8bc] border-b-[#666] bg-[#dddcd6] font-['Noto_Sans_CJK_KR',sans-serif]">
      <TitleBar />
      <Toolbar />
      <div className="flex flex-1 pb-2 pl-1.5">
        <Sidebar />
        <ChartArea />
        <ToolRail />
      </div>
    </div>
  );
}
